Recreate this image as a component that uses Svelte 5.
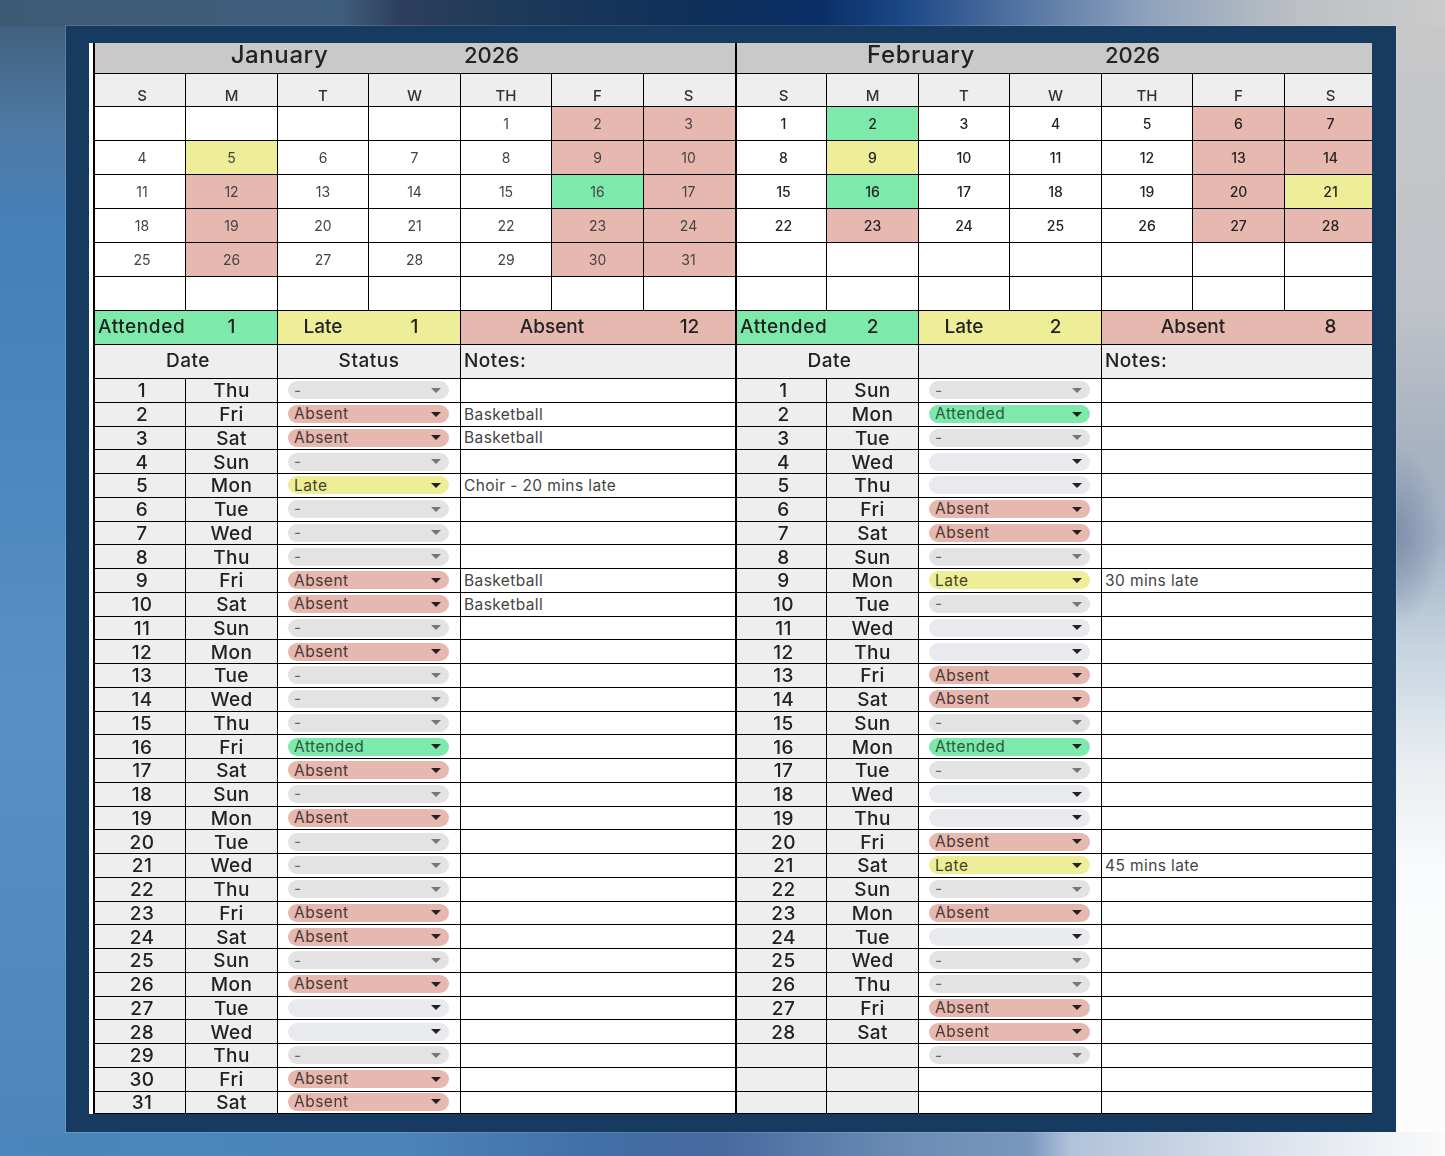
<script>
  const kinds = {
    A: { label: 'Absent', cls: 'absent' },
    L: { label: 'Late', cls: 'late' },
    G: { label: 'Attended', cls: 'attended' },
    D: { label: '-', cls: 'dash' },
    B: { label: '', cls: 'blank' }
  };
  const names = ['Sun', 'Mon', 'Tue', 'Wed', 'Thu', 'Fri', 'Sat'];
  const weekdays = ['S', 'M', 'T', 'W', 'TH', 'F', 'S'];

  function build(name, cls, days, offset, statuses, notes, counts, statusTitle, extra) {
    const codes = statuses.split('');
    const cal = Array.from({ length: 42 }, (_, i) => {
      const d = i - offset + 1;
      if (d < 1 || d > days) return { d: '', cls: '' };
      return { d, cls: kinds[codes[d - 1]].cls };
    });
    const rows = Array.from({ length: 31 }, (_, i) => {
      const inMonth = i < days;
      const code = inMonth ? codes[i] : extra[i - days];
      return {
        n: inMonth ? i + 1 : '',
        day: inMonth ? names[(i + offset) % 7] : '',
        chip: code ? kinds[code] : null,
        note: notes[i + 1] || '',
        last: i === 30
      };
    });
    return { name, cls, cal, rows, counts, statusTitle };
  }

  const months = [
    build('January', 'jan', 31, 4, 'DAADLDDDAADADDDGADADDDAADABBDAA',
      { 2: 'Basketball', 3: 'Basketball', 5: 'Choir - 20 mins late', 9: 'Basketball', 10: 'Basketball' },
      [1, 1, 12], 'Status', []),
    build('February', 'feb', 28, 0, 'DGDBBAADLDBBAADGDBBALDABDDAA',
      { 9: '30 mins late', 21: '45 mins late' },
      [2, 2, 8], '', ['D'])
  ];
</script>

<div class="page">
  <div class="panel">
    <div class="sheet">
      {#each months as m}
        <section class="month {m.cls}">
          <div class="title">
            <span class="name">{m.name}</span>
            <span class="year">2026</span>
          </div>
          {#each weekdays as w, i}
            <div class="wd" class:c1={i === 0} class:c7={i === 6}>{w}</div>
          {/each}
          {#each m.cal as c, i}
            <div class="day {c.cls}" class:c1={i % 7 === 0} class:c7={i % 7 === 6}>{c.d}</div>
          {/each}

          <div class="sum s2 attended"><span class="att">Attended</span><span>{m.counts[0]}</span></div>
          <div class="sum s2 late"><span>Late</span><span>{m.counts[1]}</span></div>
          <div class="sum s3 absent"><span class="abs">Absent</span><span class="c7">{m.counts[2]}</span></div>

          <div class="head s2 c1">Date</div>
          <div class="head s2">{m.statusTitle}</div>
          <div class="head s3 left">Notes:</div>

          {#each m.rows as r}
            <div class="date c1">{r.n}</div>
            <div class="date">{r.day}</div>
            <div class="status s2" class:last={r.last}>
              {#if r.chip}
                <div class="chip {r.chip.cls}">
                  <span>{r.chip.label}</span>
                  <i class="arrow"></i>
                </div>
              {/if}
            </div>
            <div class="note s3">{r.note}</div>
          {/each}
        </section>
      {/each}
    </div>
  </div>
</div>

<style>
  :global(body) {
    margin: 0;
    font-family: Inter, "Noto Sans", sans-serif;
  }
  .page {
    box-sizing: border-box;
    width: 1445px;
    height: 1156px;
    padding: 26px 49px 24px 66px;
    overflow: hidden;
    background-color: #fdfdfd;
    background-image:
      linear-gradient(90deg, #3f5a75 0, #3f5d7c 340px, #2c3f5c 400px, #1f3a58 500px, #0f2f5b 700px, #0a2f66 820px, #1a4785 900px, #4a6c9e 1000px, #8fa3bd 1150px, #bdc0c4 1300px, #cbcbcb 1445px),
      linear-gradient(90deg, #4a86bb 0, #4d84b8 400px, #406fa5 600px, #47699e 720px, #6b8bb5 900px, #7a97bd 1030px, #b0c2da 1070px, #dde3ed 1280px, #fafafa 1445px),
      linear-gradient(180deg, #3f5a75 0, #4e7aa5 130px, #477fb8 220px, #4a85bc 400px, #5a90c4 700px, #4d85ba 1156px),
      radial-gradient(ellipse 46px 90px at 1px 535px, #7d8faa, rgba(125, 143, 170, 0)),
      linear-gradient(180deg, #c8c8c8 0, #c0c3c9 300px, #a9b3c1 440px, #a3b3c5 540px, #c4d2df 640px, #e9edf1 760px, #fafbfc 880px, #fdfdfd 1156px);
    background-repeat: no-repeat;
    background-size: 100% 26px, 100% 24px, 66px 100%, 49px 100%, 49px 100%;
    background-position: top, bottom, left, right, right;
  }
  .panel {
    box-sizing: border-box;
    width: 1330px;
    height: 1106px;
    padding: 17px 24px 18px 23px;
    background: #173a60;
    outline: 1px solid rgba(255, 255, 255, 0.14);
  }
  .sheet {
    display: flex;
    width: 1283px;
    height: 1071px;
    box-sizing: border-box;
    border-left: 4px solid #fff;
    filter: blur(0.2px);
    color: #222;
  }
  .month {
    display: grid;
    gap: 1px;
    padding-bottom: 1px;
    background: #000;
    border-left: 2px solid #000;
    grid-template-rows: 30px 32px repeat(6, 33px) 33px 33px repeat(30, 22.75px) 21.5px;
  }
  .jan {
    width: 640px;
    grid-template-columns: 90px 91px 90px 91px 90px 91px 91px;
  }
  .feb {
    width: 635px;
    grid-template-columns: 89px 91px 90px 91px 90px 91px 87px;
  }
  .s2 { grid-column: span 2; }
  .s3 { grid-column: span 3; }

  .title {
    grid-column: 1 / -1;
    display: grid;
    grid-template-columns: subgrid;
    align-items: center;
    padding-bottom: 6px;
    box-sizing: border-box;
    background: #c9c9c9;
    font-size: 24px;
    font-weight: 500;
    line-height: 1;
    letter-spacing: 0.6px;
  }
  .name {
    grid-column: 1 / 5;
    text-align: center;
    padding-left: 4px;
  }
  .year {
    grid-column: 5 / 7;
    padding-left: 3px;
    font-size: 22px;
    letter-spacing: 0;
  }
  .wd {
    display: flex;
    align-items: flex-end;
    justify-content: center;
    padding-bottom: 1px;
    background: #eee;
    font-size: 15px;
    font-weight: 500;
    color: #333;
  }
  .day {
    display: flex;
    align-items: center;
    justify-content: center;
    box-sizing: border-box;
    background: #fff;
    font-size: 14px;
    color: #444;
  }
  .c1 { padding-left: 4px; box-sizing: border-box; }
  .jan .c7 { padding-right: 2px; }
  .feb .c7 { padding-left: 4px; }
  .feb .day {
    color: #222;
    font-weight: 500;
  }
  .day.absent, .sum.absent { background: #e6b8af; }
  .day.late, .sum.late { background: #eeee99; }
  .day.attended, .sum.attended { background: #7deaac; }

  .sum {
    display: grid;
    grid-template-columns: subgrid;
    align-items: center;
    justify-items: center;
    padding-bottom: 2px;
    box-sizing: border-box;
    font-size: 19px;
    font-weight: 500;
    white-space: nowrap;
  }
  .jan .sum .c7 { padding-right: 0; }
  .sum .att {
    justify-self: start;
    padding-left: 3px;
    letter-spacing: 0.6px;
  }
  .sum .abs {
    grid-column: span 2;
  }
  .head {
    display: flex;
    align-items: center;
    justify-content: center;
    padding-bottom: 2px;
    box-sizing: border-box;
    background: #eee;
    font-size: 19px;
    font-weight: 500;
    letter-spacing: 0.5px;
  }
  .head.left {
    justify-content: flex-start;
    padding-left: 3px;
  }
  .date {
    display: flex;
    align-items: center;
    justify-content: center;
    padding-top: 1px;
    box-sizing: border-box;
    background: #eee;
    font-size: 19px;
    font-weight: 500;
    letter-spacing: 0.4px;
    line-height: 1;
    overflow: hidden;
  }
  .status {
    display: flex;
    align-items: center;
    padding: 0 11px 0 10px;
    background: #fff;
  }
  .status.last {
    align-items: flex-start;
    padding-top: 1px;
  }
  .note {
    display: flex;
    align-items: center;
    padding-left: 3px;
    background: #fff;
    font-size: 15.5px;
    color: #444;
    letter-spacing: 0.4px;
    white-space: nowrap;
  }
  .chip {
    flex: 1;
    display: flex;
    align-items: center;
    justify-content: space-between;
    box-sizing: border-box;
    height: 18px;
    padding: 0 8px 0 6px;
    border-radius: 9px;
    font-size: 15.5px;
    line-height: 1;
    letter-spacing: 0.5px;
    color: #4b3733;
  }
  .chip.absent { background: #e6b8af; }
  .chip.late { background: #eeee99; color: #444422; }
  .chip.attended { background: #7deaac; color: #2b5a40; }
  .chip.dash { background: #e3e3e3; color: #666; }
  .chip.blank { background: #e8eaed; }
  .arrow {
    width: 0;
    height: 0;
    border-left: 5px solid transparent;
    border-right: 5px solid transparent;
    border-top: 5px solid #222;
  }
  .chip.dash .arrow { border-top-color: #777; }
</style>
